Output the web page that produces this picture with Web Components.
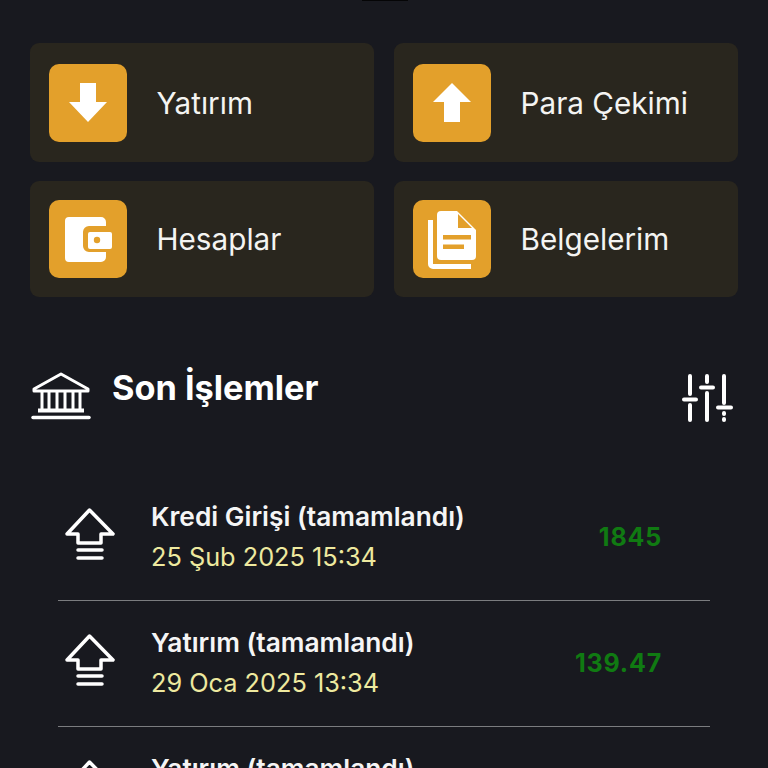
<!DOCTYPE html>
<html lang="tr">
<head>
<meta charset="utf-8">
<style>
  html, body { margin: 0; height: 768px; overflow: hidden; background: #18191f; }
  body { font-family: Inter, "Liberation Sans", sans-serif; color: #fff; }
  .notch { position: absolute; top: 0; left: 362px; width: 46px; height: 1px; background: #050506; }
</style>
</head>
<body>
<div class="notch"></div>
<app-screen>
  <action-grid>
    <action-card label="Yatırım" icon="down"></action-card>
    <action-card label="Para Çekimi" icon="up"></action-card>
    <action-card label="Hesaplar" icon="wallet"></action-card>
    <action-card label="Belgelerim" icon="docs"></action-card>
  </action-grid>
  <section-head title="Son İşlemler"></section-head>
  <tx-row title="Kredi Girişi (tamamlandı)" date="25 Şub 2025 15:34" amount="1845"></tx-row>
  <tx-row title="Yatırım (tamamlandı)" date="29 Oca 2025 13:34" amount="139.47"></tx-row>
  <tx-row title="Yatırım (tamamlandı)"></tx-row>
</app-screen>

<script>
const cardIcons = {
  down: `<path d="M31 19h16v19h11L39 58 20 38h11z" fill="#fff"/>`,
  up: `<path d="M39 19l19 19H47v20H31V38H20z" fill="#fff"/>`,
  wallet: `<path d="M20 17h32a5 5 0 0 1 5 5v4H40a6 6 0 0 0-6 6v14a6 6 0 0 0 6 6h17v5a5 5 0 0 1-5 5H20a4 4 0 0 1-4-4V21a4 4 0 0 1 4-4z" fill="#fff"/>
    <path d="M41 32h20a2 2 0 0 1 2 2v13a2 2 0 0 1-2 2H41a2 2 0 0 1-2-2V34a2 2 0 0 1 2-2z" fill="#fff"/>
    <circle cx="48" cy="40" r="3.200" fill="#e3a02b"/>`,
  docs: `<path d="M28 11h16l19 19v26a4 4 0 0 1-4 4H28a4 4 0 0 1-4-4V15a4 4 0 0 1 4-4z" fill="#fff"/>
    <path d="M45 14l14 14H45z" fill="#e3a02b"/>
    <path d="M30 35h28v4.500H30zM30 44.500h21V49H30z" fill="#e3a02b"/>
    <path d="M17.500 20v44a2.500 2.500 0 0 0 2.500 2.500h38" fill="none" stroke="#fff" stroke-width="5"/>`
};

const actionCardTemplate = document.createElement("template");
actionCardTemplate.innerHTML = `
  <style>
    :host {
      display: flex;
      align-items: center;
      gap: 29.5px;
      padding: 0 19px;
      background-color: #29261e;
      border-radius: 9px;
    }
    .icon {
      width: 78px;
      height: 78px;
      flex: none;
      background-color: #e3a02b;
      border-radius: 10px;
    }
    svg { display: block; }
    span {
      font-size: 29.7px;
      color: #f4f4f2;
      white-space: nowrap;
    }
  </style>
  <div class="icon"><svg width="78" height="78" viewBox="0 0 78 78"></svg></div>
  <span></span>
`;

class ActionCard extends HTMLElement {
  constructor() {
    super();
    this.attachShadow({ mode: "open" }).appendChild(actionCardTemplate.content.cloneNode(true));
  }
  connectedCallback() {
    this.shadowRoot.querySelector("span").innerText = this.getAttribute("label");
    this.shadowRoot.querySelector("svg").innerHTML = cardIcons[this.getAttribute("icon")];
  }
}

const actionGridTemplate = document.createElement("template");
actionGridTemplate.innerHTML = `
  <style>
    :host {
      display: grid;
      grid-template-columns: 344px 344px;
      grid-template-rows: 119px 116px;
      column-gap: 20px;
      row-gap: 19px;
      padding: 43px 0 0 30px;
      height: 254px;
    }
  </style>
  <slot></slot>
`;

class ActionGrid extends HTMLElement {
  constructor() {
    super();
    this.attachShadow({ mode: "open" }).appendChild(actionGridTemplate.content.cloneNode(true));
  }
}

const sectionHeadTemplate = document.createElement("template");
sectionHeadTemplate.innerHTML = `
  <style>
    :host {
      display: flex;
      align-items: flex-start;
      margin-top: 74px;
      padding: 0 34px 0 31px;
      height: 104px;
    }
    h2 {
      margin: -1px 0 0 21px;
      font-size: 34.3px;
      line-height: 36px;
      font-weight: 700;
      flex: 1;
    }
    svg { display: block; flex: none; }
  </style>
  <svg width="60" height="50" viewBox="0 0 60 50" fill="none" stroke="#fff" stroke-width="3">
    <path d="M3 20v-2L30 3l27 15v2z" stroke-linejoin="round"/>
    <path d="M11 21v17M18 21v17M26 21v17M34 21v17M42 21v17M49 21v17"/>
    <path d="M7 39.500h46" stroke-width="4"/>
    <path d="M2 46.500h56" stroke-width="3.500" stroke-linecap="round"/>
  </svg>
  <h2></h2>
  <svg width="52" height="48" viewBox="0 0 52 48" fill="none" stroke="#fff" stroke-width="4" stroke-linecap="round" style="margin-top:3px">
    <path d="M8 2v18M8 31v15M2 25.500h12"/>
    <path d="M25 2v6M25 19v27M19 13.500h12"/>
    <path d="M42 2v27M42 39v1M42 45v1M36 33.500h13"/>
  </svg>
`;

class SectionHead extends HTMLElement {
  constructor() {
    super();
    this.attachShadow({ mode: "open" }).appendChild(sectionHeadTemplate.content.cloneNode(true));
  }
  connectedCallback() {
    this.shadowRoot.querySelector("h2").innerText = this.getAttribute("title");
  }
}

const txRowTemplate = document.createElement("template");
txRowTemplate.innerHTML = `
  <style>
    :host {
      display: flex;
      align-items: flex-start;
      box-sizing: border-box;
      height: 126px;
      margin: 0 58px;
      padding: 26px 48px 0 7px;
      border-bottom: 1px solid #7b7c7f;
    }
    svg { display: block; flex: none; margin-top: 7px; }
    .text { flex: 1; margin-left: 36px; }
    .title { font-size: 26.3px; line-height: 32px; font-weight: 600; color: #f5f5f5; white-space: nowrap; }
    .date { font-size: 25.3px; line-height: 32px; margin-top: 8px; color: #eee99f; white-space: nowrap; }
    .amount { font-size: 25px; line-height: 32px; font-weight: 700; color: #107a12; margin-top: 20px; letter-spacing: 0.8px; }
  </style>
  <svg width="50" height="52" viewBox="0 0 50 52" fill="none" stroke="#fff" stroke-linejoin="round">
    <path d="M24.500 2L48 26H36V35H13V26H2z" stroke-width="3.500"/>
    <path d="M13 42h24M13 50h24" stroke-width="3.500" stroke-linecap="round"/>
  </svg>
  <div class="text">
    <div class="title"></div>
    <div class="date"></div>
  </div>
  <div class="amount"></div>
`;

class TxRow extends HTMLElement {
  constructor() {
    super();
    this.attachShadow({ mode: "open" }).appendChild(txRowTemplate.content.cloneNode(true));
  }
  connectedCallback() {
    this.shadowRoot.querySelector(".title").innerText = this.getAttribute("title");
    // the last row runs past the fold, only its title is known
    this.shadowRoot.querySelector(".date").innerText = this.getAttribute("date") || "";
    this.shadowRoot.querySelector(".amount").innerText = this.getAttribute("amount") || "";
  }
}

class AppScreen extends HTMLElement {
  constructor() {
    super();
    this.attachShadow({ mode: "open" }).innerHTML = `<style>:host { display: block; }</style><slot></slot>`;
  }
}

window.customElements.define("action-card", ActionCard);
window.customElements.define("action-grid", ActionGrid);
window.customElements.define("section-head", SectionHead);
window.customElements.define("tx-row", TxRow);
window.customElements.define("app-screen", AppScreen);
</script>
</body>
</html>
